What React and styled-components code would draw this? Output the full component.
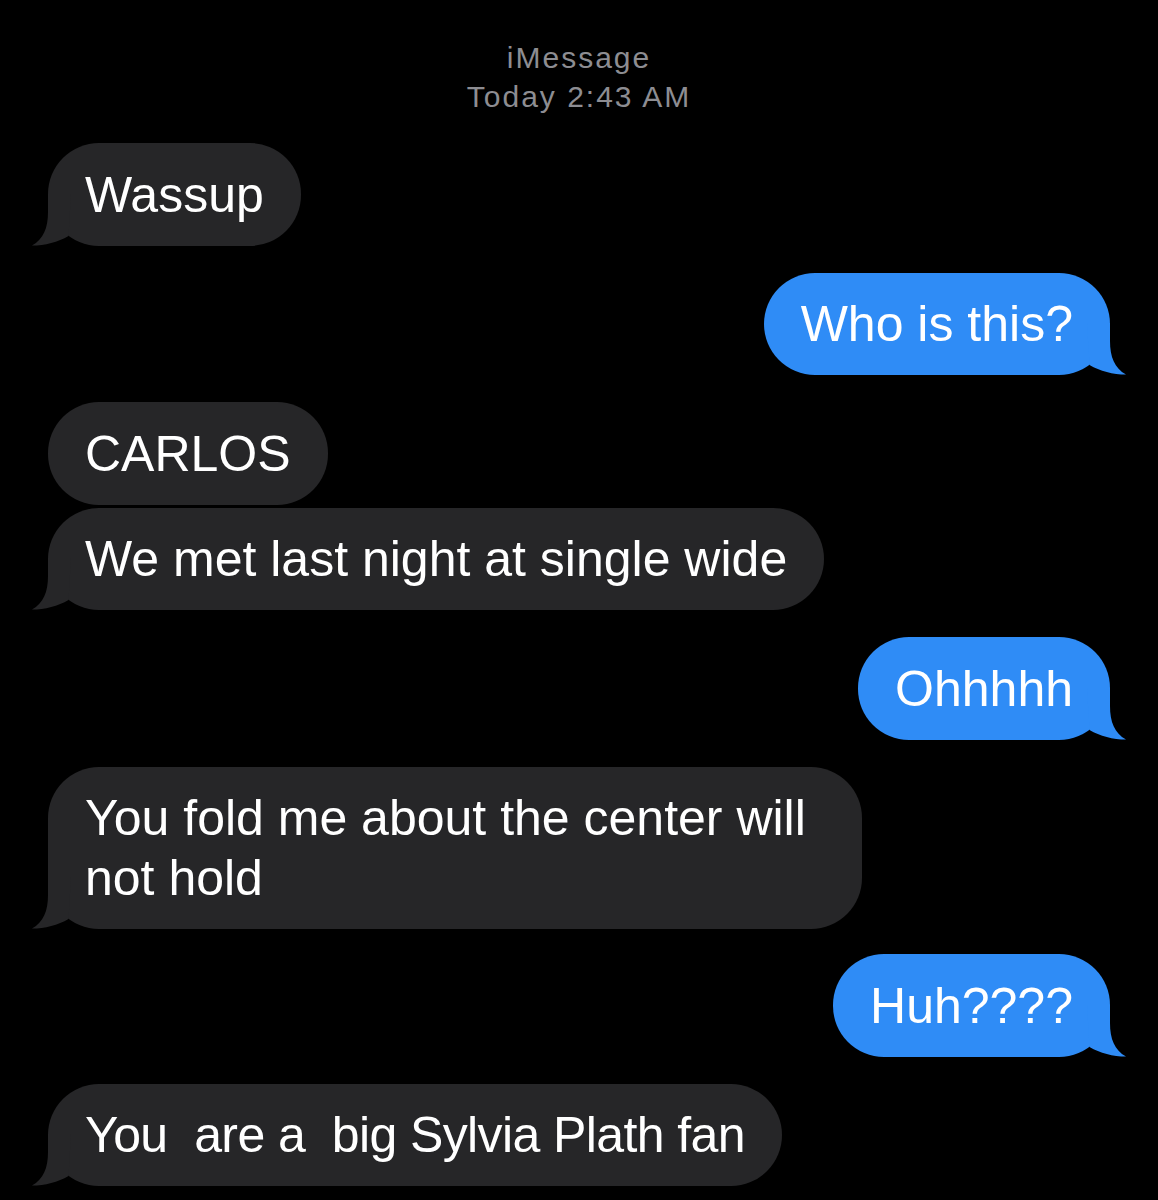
import React from "react";
import styled, { createGlobalStyle, css } from "styled-components";

const GlobalStyle = createGlobalStyle`
  html, body {
    margin: 0;
    padding: 0;
    background: #000;
    overflow: hidden;
  }
  body {
    font-family: "Liberation Sans", Arial, sans-serif;
    -webkit-font-smoothing: antialiased;
  }
`;

const Page = styled.main`
  width: 1158px;
  min-height: 1200px;
  box-sizing: border-box;
  padding: 38px 48px 0;
  background: #000;
  display: flex;
  flex-direction: column;
`;

const Header = styled.header`
  display: flex;
  flex-direction: column;
  align-items: center;
  color: #8d8d92;
  font-size: 30px;
  line-height: 39px;
  letter-spacing: 2px;
`;

const Thread = styled.section`
  display: flex;
  flex-direction: column;
  margin-top: 27px;
`;

const Row = styled.div`
  display: flex;
  justify-content: ${(p) => (p.$mine ? "flex-end" : "flex-start")};
  margin-top: ${(p) => (p.$first ? 0 : p.$gap)}px;
`;

const Bubble = styled.div`
  position: relative;
  z-index: 0;
  box-sizing: border-box;
  max-width: 814px;
  padding: 21.5px 37px 21px;
  border-radius: 51px;
  font-size: 50px;
  line-height: 60px;
  color: #fff;
  white-space: pre-wrap;
  background: ${(p) => (p.$mine ? "#2f8cf6" : "#262628")};
  ${(p) =>
    p.$condensed &&
    css`
      letter-spacing: -0.6px;
    `}
`;

const TailSvg = styled.svg`
  position: absolute;
  z-index: -1;
  bottom: 0;
  width: 60px;
  height: 60px;
  ${(p) =>
    p.$mine
      ? css`
          right: -17px;
          transform: scaleX(-1);
        `
      : css`
          left: -17px;
        `}
`;

const Tail = ({ mine, color }) => (
  <TailSvg $mine={mine} viewBox="0 0 60 60" aria-hidden="true">
    <path
      d="M17 8 L17 26 C17 42 12.5 53 1 59.6 C14 59.6 27 56 37.5 50 L40 8 Z"
      fill={color}
    />
  </TailSvg>
);

const BLUE = "#2f8cf6";
const GRAY = "#262628";

const messages = [
  { text: "Wassup", mine: false, tail: true, gap: 0 },
  { text: "Who is this?", mine: true, tail: true, gap: 27 },
  { text: "CARLOS", mine: false, tail: false, gap: 27 },
  { text: "We met last night at single wide", mine: false, tail: true, gap: 3 },
  { text: "Ohhhhh", mine: true, tail: true, gap: 27 },
  { text: "You fold me about the center will not hold", mine: false, tail: true, gap: 27 },
  { text: "Huh????", mine: true, tail: true, gap: 25 },
  { text: "You  are a  big Sylvia Plath fan", mine: false, tail: true, condensed: true, gap: 27 },
];

export default function App() {
  return (
    <>
      <GlobalStyle />
      <Page>
        <Header>
          <span>iMessage</span>
          <span>Today 2:43 AM</span>
        </Header>
        <Thread>
          {messages.map((m, i) => (
            <Row key={i} $mine={m.mine} $first={i === 0} $gap={m.gap}>
              <Bubble $mine={m.mine} $condensed={m.condensed}>
                {m.tail && <Tail mine={m.mine} color={m.mine ? BLUE : GRAY} />}
                {m.text}
              </Bubble>
            </Row>
          ))}
        </Thread>
      </Page>
    </>
  );
}
